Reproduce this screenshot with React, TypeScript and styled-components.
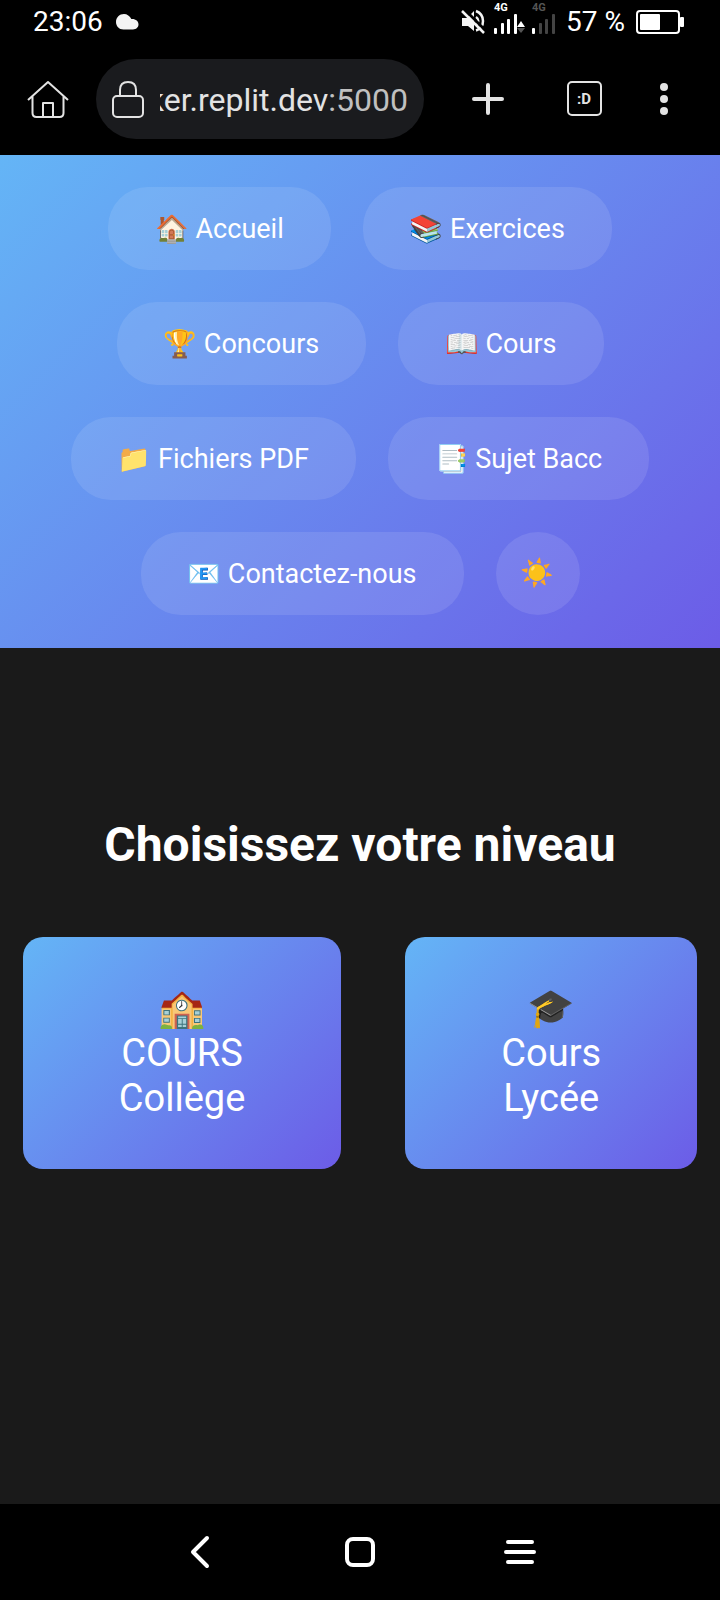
import React from "react";
import styled, { createGlobalStyle } from "styled-components";

const GlobalStyle = createGlobalStyle`
  *, *::before, *::after { box-sizing: border-box; }
  html, body { margin: 0; background: #1a1a1a; }
  body, button { font-family: Roboto, "Noto Color Emoji", sans-serif; }
`;

const gradient = "linear-gradient(135deg, #64b5f6 0%, #6c5ce7 100%)";

const Screen = styled.div`
  display: flex;
  flex-direction: column;
  min-height: 100vh;
  color: #ffffff;
`;

const StatusBar = styled.div`
  display: flex;
  align-items: center;
  justify-content: space-between;
  height: 44px;
  padding: 0 36px 0 33px;
  background: #000000;
  font-size: 28px;
  line-height: 46px;
`;

const StatusGroup = styled.div<{ $gap: number }>`
  display: flex;
  align-items: center;
  gap: ${(p) => p.$gap}px;
`;

const SignalGroup = styled.div`
  display: flex;
  align-items: flex-end;
  gap: 8px;
  padding-bottom: 8px;
`;

const Signal = styled.div`
  display: flex;
  flex-direction: column;
  gap: 1px;
  width: 30px;
`;

const SignalLabel = styled.span<{ $dim?: boolean }>`
  font-size: 11px;
  line-height: 10px;
  font-weight: 700;
  color: ${(p) => (p.$dim ? "#555555" : "#ffffff")};
`;

const Toolbar = styled.div`
  display: flex;
  align-items: center;
  height: 111px;
  padding: 0 24px 2px 16px;
  background: #000000;
`;

const IconButton = styled.button<{ $width: number }>`
  display: flex;
  flex: none;
  align-items: center;
  justify-content: center;
  width: ${(p) => p.$width}px;
  height: 64px;
  padding: 0;
  border: 0;
  background: transparent;
  color: #e3e3e3;
`;

const AddressBar = styled.div`
  display: flex;
  flex: 1;
  align-items: center;
  gap: 16px;
  min-width: 0;
  height: 80px;
  margin: 0 16px;
  padding: 0 16px;
  border-radius: 40px;
  background: #1a1b1e;
`;

const Address = styled.div`
  display: flex;
  flex: 1;
  justify-content: flex-end;
  min-width: 0;
  padding-top: 2px;
  overflow: hidden;
  font-size: 32px;
  line-height: 40px;
  white-space: nowrap;
  color: #e3e3e3;
`;

const Port = styled.span`
  color: #c0c0c0;
`;

const TabCount = styled.span`
  display: flex;
  align-items: center;
  justify-content: center;
  width: 35px;
  height: 35px;
  border: 2px solid #e3e3e3;
  border-radius: 5px;
  font-size: 15px;
  line-height: 16px;
  font-weight: 700;
`;

const Nav = styled.nav`
  display: flex;
  flex-wrap: wrap;
  justify-content: center;
  gap: 32px;
  padding: 32px 32px 33px;
  background: ${gradient};
`;

const NavLink = styled.a`
  padding: 27px 47px 25px;
  border-radius: 40px;
  background: rgba(255, 255, 255, 0.1);
  color: #ffffff;
  font-size: 27px;
  line-height: 31px;
  text-decoration: none;
`;

const ThemeButton = styled.button`
  width: 84px;
  height: 83px;
  padding: 0;
  border: 0;
  border-radius: 50%;
  background: rgba(255, 255, 255, 0.1);
  font-size: 27px;
  line-height: 31px;
`;

const Main = styled.main`
  display: flex;
  flex: 1;
  flex-direction: column;
  align-items: center;
  gap: 63px;
  padding: 168px 16px 64px;
`;

const Title = styled.h1`
  margin: 0;
  font-size: 48px;
  line-height: 58px;
  font-weight: 700;
  text-align: center;
`;

const Cards = styled.div`
  display: flex;
  justify-content: center;
  gap: 64px;
`;

const Card = styled.button`
  display: flex;
  flex-direction: column;
  align-items: center;
  padding: 49px 96px 48px;
  border: 0;
  border-radius: 20px;
  background: ${gradient};
  color: #ffffff;
  font-size: 38px;
  line-height: 45px;
`;

const SystemBar = styled.div`
  display: flex;
  align-items: center;
  justify-content: center;
  gap: 96px;
  height: 96px;
  background: #000000;
`;

const links = [
  ["🏠", "Accueil"],
  ["📚", "Exercices"],
  ["🏆", "Concours"],
  ["📖", "Cours"],
  ["📁", "Fichiers PDF"],
  ["📑", "Sujet Bacc"],
  ["📧", "Contactez-nous"],
];

const levels = [
  ["🏫", "COURS", "Collège"],
  ["🎓", "Cours", "Lycée"],
];

function Bars({ colors, arrows }: { colors: string[]; arrows?: boolean }) {
  return (
    <svg width="32" height="20" viewBox="0 0 32 20">
      {colors.map((c, i) => (
        <rect key={i} x={[0, 7, 13, 20][i]} y={[14, 9, 5, 0][i]} width="3" height={[6, 11, 15, 20][i]} rx="1" fill={c} />
      ))}
      {arrows && (
        <>
          <path d="M27 7 L31 13 H23Z" fill="#ffffff" />
          <path d="M27 19 L31 14 H23Z" fill="#555555" />
        </>
      )}
    </svg>
  );
}

export default function App() {
  return (
    <Screen>
      <GlobalStyle />
      <StatusBar>
        <StatusGroup $gap={13}>
          <span>23:06</span>
          <svg width="23" height="16" viewBox="0 0 23 16" fill="#f4f4f4">
            <path d="M8 0 C11 0 14 2 15.300 5 C19.500 4.600 22.500 7 22.500 10.300 C22.500 13.500 20 15.500 17 15.500 H7.500 C3 15.500 0 12 0 8 C0 3.500 3.500 0 8 0Z" />
          </svg>
        </StatusGroup>
        <StatusGroup $gap={4}>
          <SignalGroup>
            <svg width="25" height="25" viewBox="0 0 25 25">
              <path d="M1 9 H6 L13 2 V22 L7 17 H1Z" fill="#f4f4f4" />
              <path d="M15 2 C20 4 22 8 22 12 C22 16 20 20 15 21.500 M15 8 C18 10 18 14 15 16" fill="none" stroke="#f4f4f4" strokeWidth="2.500" />
              <path d="M3 0 L25 22" stroke="#000000" strokeWidth="3" />
              <path d="M1 2 L23 24" stroke="#f4f4f4" strokeWidth="2.500" />
            </svg>
            <Signal>
              <SignalLabel>4G</SignalLabel>
              <Bars colors={["#ffffff", "#ffffff", "#ffffff", "#ffffff"]} arrows />
            </Signal>
            <Signal>
              <SignalLabel $dim>4G</SignalLabel>
              <Bars colors={["#ffffff", "#444444", "#444444", "#444444"]} />
            </Signal>
          </SignalGroup>
          <StatusGroup $gap={11}>
            <span>57 %</span>
            <svg width="48" height="24" viewBox="0 0 48 24">
              <rect x="1" y="1" width="42" height="22" rx="3" fill="none" stroke="#ffffff" strokeWidth="2" />
              <rect x="4" y="4" width="20" height="16" rx="1" fill="#ffffff" />
              <rect x="44" y="7" width="4" height="10" rx="1" fill="#ffffff" />
            </svg>
          </StatusGroup>
        </StatusGroup>
      </StatusBar>
      <Toolbar>
        <IconButton $width={64} aria-label="Page d’accueil">
          <svg width="42" height="38" viewBox="0 0 42 38" fill="none" stroke="currentColor" strokeWidth="2" strokeLinejoin="round">
            <path d="M1 20 L21 2 L41 20 M5.500 16 V33 Q5.500 37 9.500 37 H32.500 Q36.500 37 36.500 33 V16 M16 37 V23 H26 V37" />
          </svg>
        </IconButton>
        <AddressBar>
          <svg width="32" height="38" viewBox="0 0 32 38" fill="none" stroke="#e3e3e3" strokeWidth="2">
            <rect x="1" y="16" width="30" height="21" rx="4" />
            <path d="M8 16 V10 Q8 2 16 2 Q24 2 24 10 V16" />
          </svg>
          <Address>
            <span>
              ker.replit.dev<Port>:5000</Port>
            </span>
          </Address>
        </AddressBar>
        <IconButton $width={96} aria-label="Nouvel onglet">
          <svg width="32" height="32" viewBox="0 0 32 32" stroke="currentColor" strokeWidth="4" strokeLinecap="round">
            <path d="M2 16 H30 M16 2 V30" />
          </svg>
        </IconButton>
        <IconButton $width={96} aria-label="Onglets">
          <TabCount>:D</TabCount>
        </IconButton>
        <IconButton $width={64} aria-label="Menu">
          <svg width="8" height="32" viewBox="0 0 8 32" fill="currentColor">
            <circle cx="4" cy="4" r="4" />
            <circle cx="4" cy="16" r="4" />
            <circle cx="4" cy="28" r="4" />
          </svg>
        </IconButton>
      </Toolbar>
      <Nav>
        {links.map(([icon, label]) => (
          <NavLink key={label} href="#">
            {icon} {label}
          </NavLink>
        ))}
        <ThemeButton aria-label="Changer de thème">☀️</ThemeButton>
      </Nav>
      <Main>
        <Title>Choisissez votre niveau</Title>
        <Cards>
          {levels.map(([icon, first, second]) => (
            <Card key={second}>
              <span>{icon}</span>
              <span>{first}</span>
              <span>{second}</span>
            </Card>
          ))}
        </Cards>
      </Main>
      <SystemBar>
        <IconButton $width={64} aria-label="Retour">
          <svg width="20" height="34" viewBox="0 0 20 34" fill="none" stroke="#ffffff" strokeWidth="4" strokeLinecap="round" strokeLinejoin="round">
            <path d="M17 3 L3 17 L17 31" />
          </svg>
        </IconButton>
        <IconButton $width={64} aria-label="Accueil du téléphone">
          <svg width="30" height="30" viewBox="0 0 30 30" fill="none" stroke="#ffffff" strokeWidth="4">
            <rect x="2" y="2" width="26" height="26" rx="6" />
          </svg>
        </IconButton>
        <IconButton $width={64} aria-label="Applications récentes">
          <svg width="32" height="24" viewBox="0 0 32 24" fill="none" stroke="#ffffff" strokeWidth="4" strokeLinecap="round">
            <path d="M4 2 H28 M2 12 H30 M4 22 H28" />
          </svg>
        </IconButton>
      </SystemBar>
    </Screen>
  );
}
